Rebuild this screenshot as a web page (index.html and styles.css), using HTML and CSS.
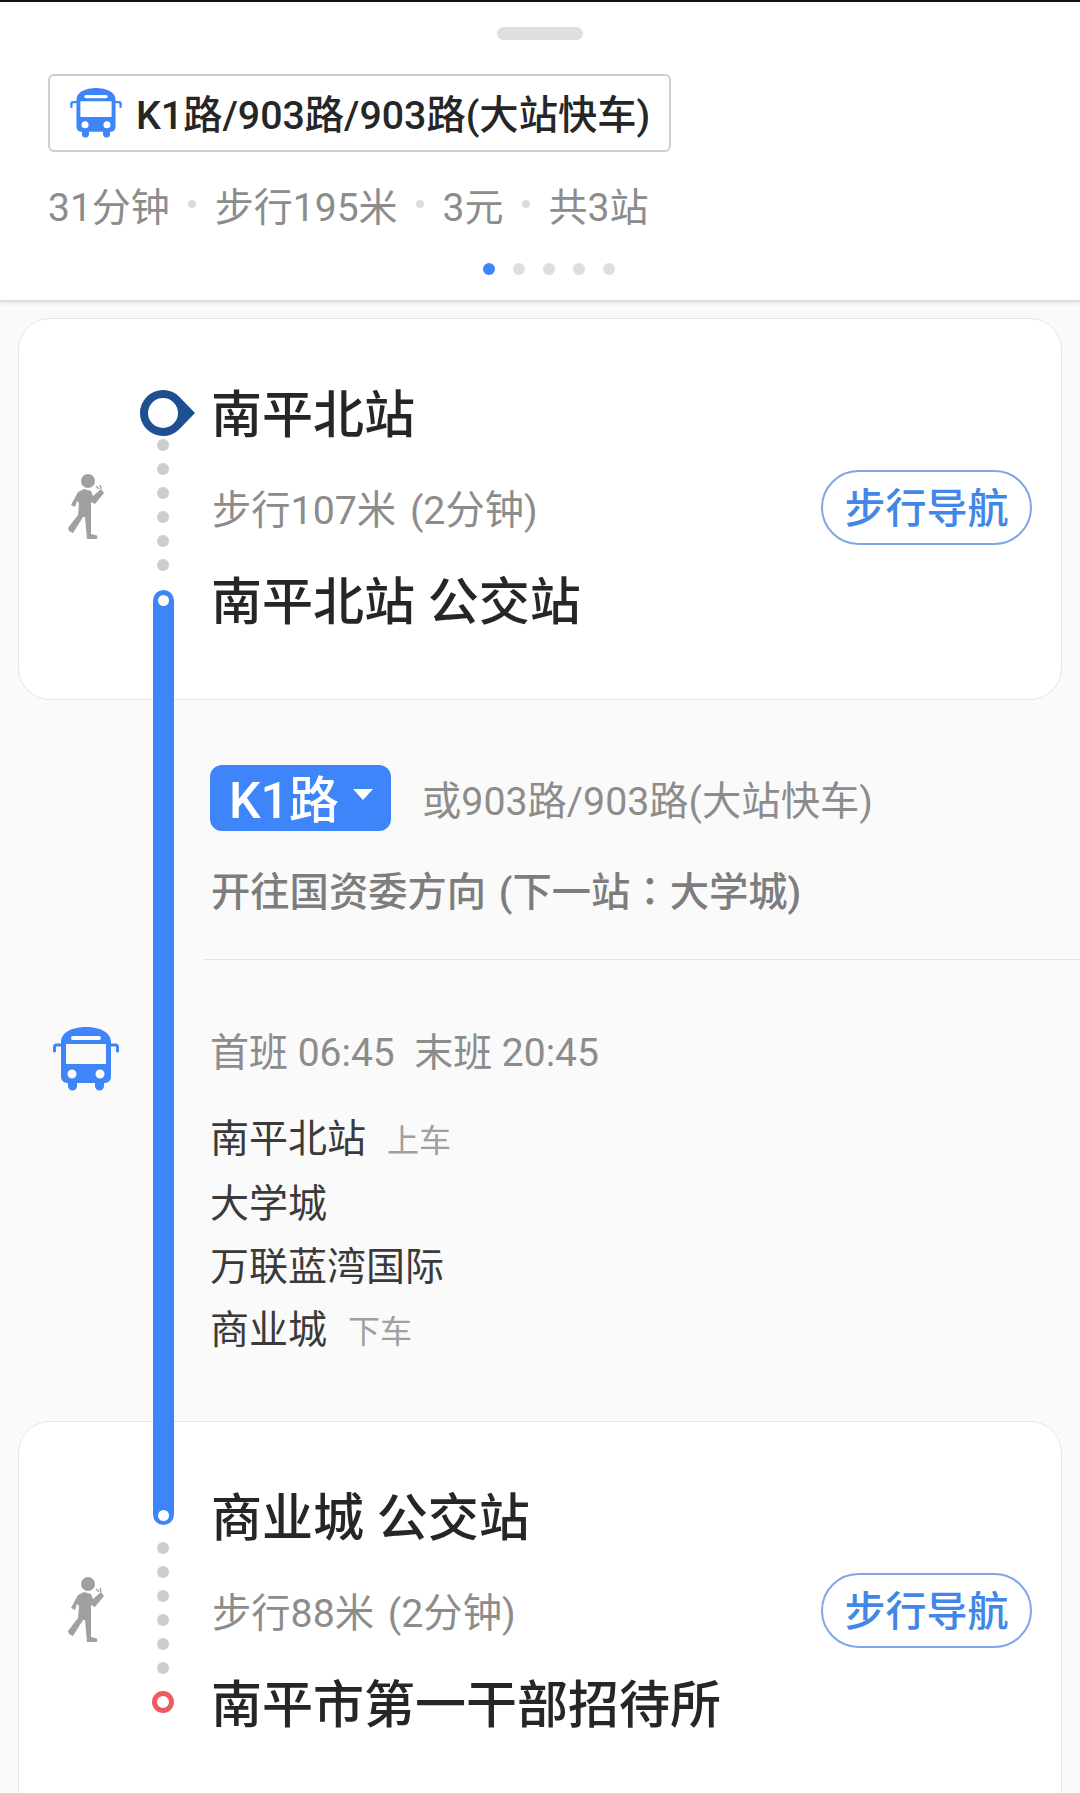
FILE: index.html
```html
<!DOCTYPE html>
<html lang="zh-CN">
<head>
    <meta charset="UTF-8">
    <meta name="viewport" content="width=device-width, initial-scale=1.0">
    <title>公交路线详情</title>
    <link rel="stylesheet" href="styles.css">
</head>
<body>
    <svg class="icon-defs" width="0" height="0">
        <symbol id="bus" viewBox="0 0 66 64">
            <path fill="currentColor" fill-rule="evenodd" d="M8 15C8 5 20 0 33 0s25 5 25 15v35a6 6 0 0 1-6 6h-1v3a4.500 4.500 0 0 1-9 0v-3H24v3a4.500 4.500 0 0 1-9 0v-3h-1a6 6 0 0 1-6-6zM20 9a2 2 0 0 0 0 4h26a2 2 0 0 0 0-4zM13 17v20h40V17zM19 42.500a4.500 4.500 0 1 0 0 9 4.500 4.500 0 0 0 0-9zM47 42.500a4.500 4.500 0 1 0 0 9 4.500 4.500 0 0 0 0-9z"/>
            <path fill="none" stroke="currentColor" stroke-width="3" stroke-linecap="round" d="M8 18H3.500C2 18 1.500 19 1.500 20v4M58 18h4.500c1.500 0 2 1 2 2v4"/>
        </symbol>
        <symbol id="walker" viewBox="0 0 37 66">
            <circle cx="20" cy="7" r="7" fill="currentColor"/>
            <path fill="currentColor" d="M10 18L16 15L23 17L25 22L33 15L36 19L27 30L23 28L23 37L23 60L29 61.500Q30 65 28 65H19L17 43L15 43L5 59L1 57L0 54L10 41L11 29L9 27L7 33L3 31Z"/>
            <path fill="none" stroke="currentColor" stroke-width="1.300" d="M28 12L31 15M32 11L33 15"/>
        </symbol>
    </svg>

    <div class="page">
        <header class="summary">
            <div class="handle"></div>
            <div class="route-chip">
                <svg class="chip-icon"><use href="#bus"/></svg>
                <span>K1路/903路/903路(大站快车)</span>
            </div>
            <div class="meta">
                <span>31分钟</span><i></i>
                <span>步行195米</span><i></i>
                <span>3元</span><i></i>
                <span>共3站</span>
            </div>
            <div class="pager">
                <b class="active"></b><b></b><b></b><b></b><b></b>
            </div>
        </header>

        <!-- Walk to the stop -->
        <section class="segment card card-first">
            <div class="side-icon">
                <svg class="walker"><use href="#walker"/></svg>
            </div>
            <div class="rail rail-start">
                <svg class="marker-start" viewBox="0 0 46 46">
                    <path fill="#1d4f91" d="M39.500 7L55 23L39.500 39A23 23 0 1 1 39.500 7z"/>
                    <circle cx="23" cy="23" r="15" fill="#fff"/>
                </svg>
                <div class="dots"><b></b><b></b><b></b><b></b><b></b><b></b></div>
                <div class="bus-line line-top"></div>
            </div>
            <div class="walk-body">
                <h3>南平北站</h3>
                <div class="walk-row">
                    <span>步行107米 (2分钟)</span>
                    <a class="nav-btn">步行导航</a>
                </div>
                <h3>南平北站 公交站</h3>
            </div>
        </section>

        <!-- Ride -->
        <section class="segment ride">
            <div class="side-icon">
                <svg class="bus-icon"><use href="#bus"/></svg>
            </div>
            <div class="rail">
                <div class="bus-line"></div>
            </div>
            <div class="ride-body">
                <div class="line-head">
                    <div class="line-row">
                        <span class="line-badge">K1路<i class="caret"></i></span>
                        <span class="line-alt">或903路/903路(大站快车)</span>
                    </div>
                    <div class="direction">开往国资委方向 (下一站<span class="colon" lang="zh-TW">：</span>大学城)</div>
                </div>
                <div class="line-detail">
                    <div class="schedule">首班 06:45&nbsp;&nbsp;末班 20:45</div>
                    <ul class="stops">
                        <li>南平北站<small>上车</small></li>
                        <li>大学城</li>
                        <li>万联蓝湾国际</li>
                        <li>商业城<small>下车</small></li>
                    </ul>
                </div>
            </div>
        </section>

        <!-- Walk to the destination -->
        <section class="segment card card-last">
            <div class="side-icon">
                <svg class="walker"><use href="#walker"/></svg>
            </div>
            <div class="rail rail-end">
                <div class="bus-line line-bottom"></div>
                <div class="dots"><b></b><b></b><b></b><b></b><b></b><b></b></div>
                <div class="marker-end"></div>
            </div>
            <div class="walk-body">
                <h3>商业城 公交站</h3>
                <div class="walk-row">
                    <span>步行88米 (2分钟)</span>
                    <a class="nav-btn">步行导航</a>
                </div>
                <h3>南平市第一干部招待所</h3>
            </div>
        </section>
    </div>
</body>
</html>
```

FILE: styles.css
```css
/* General Styles */
html, body {
    margin: 0;
    padding: 0;
}

body {
    font-family: Roboto, "Noto Sans CJK SC", sans-serif;
    background-color: #fafafa;
}

.icon-defs {
    position: absolute;
}

.page {
    width: 1080px;
    height: 1793px;
    overflow: hidden;
}

/* Summary header */
.summary {
    box-sizing: border-box;
    height: 302px;
    padding-top: 25px;
    background-color: #fff;
    border-top: 2px solid #111;
    border-bottom: 2px solid #dedede;
    box-shadow: 0 3px 3px #f0f0f0;
}

.handle {
    width: 86px;
    height: 13px;
    margin: 0 auto;
    border-radius: 7px;
    background-color: #dfdfdf;
}

.route-chip {
    box-sizing: border-box;
    display: inline-flex;
    align-items: center;
    gap: 13px;
    width: 623px;
    height: 78px;
    margin: 34px 0 0 48px;
    padding-left: 19px;
    border: 2px solid #cfcfcf;
    border-radius: 6px;
    font-size: 39.3px;
    font-weight: 500;
    color: #262626;
    white-space: nowrap;
}

.route-chip span {
    margin-bottom: 3px;
}

.chip-icon {
    width: 54px;
    height: 50px;
    color: #3e85fa;
}

.meta {
    display: flex;
    align-items: center;
    gap: 18.5px;
    height: 50px;
    margin: 27px 0 0 48px;
    font-size: 39px;
    color: #8c8c8c;
}

.meta i {
    width: 8px;
    height: 8px;
    border-radius: 50%;
    background-color: #dcdcdc;
}

.pager {
    display: flex;
    justify-content: center;
    gap: 18px;
    margin: 34px 0 0 18px;
}

.pager b {
    width: 12px;
    height: 12px;
    border-radius: 50%;
    background-color: #dedede;
}

.pager b.active {
    background-color: #3e85fa;
}

/* Timeline segments */
.segment {
    display: grid;
    grid-template-columns: 122px 44px 1fr;
}

.card {
    box-sizing: border-box;
    margin: 0 18px;
    background-color: #fff;
    border: 1px solid #e6e6e6;
    border-radius: 32px;
}

.card-first {
    height: 382px;
    margin-top: 16px;
}

.card-last {
    height: 420px;
}

.ride {
    height: 721px;
    padding-left: 19px;
}

.side-icon {
    display: flex;
    align-items: center;
    justify-content: center;
    padding-left: 12px;
}

.ride .side-icon {
    padding-bottom: 4px;
}

.card-first .side-icon {
    padding-bottom: 4px;
}

.card-last .side-icon {
    align-items: flex-start;
    padding-top: 155px;
}

.walker {
    width: 37px;
    height: 66px;
    color: #a0a0a0;
}

.bus-icon {
    width: 66px;
    height: 64px;
    color: #3e85fa;
}

/* Rail */
.rail {
    display: flex;
    flex-direction: column;
    align-items: center;
}

.rail-start {
    padding-top: 71px;
}

.marker-start {
    flex: none;
    width: 46px;
    height: 46px;
    overflow: visible;
}

.dots {
    display: flex;
    flex-direction: column;
    gap: 12px;
}

.dots b {
    width: 12px;
    height: 12px;
    border-radius: 50%;
    background-color: #cdcdcd;
}

.rail-start .dots {
    margin-top: 3px;
}

.bus-line {
    flex: 1;
    position: relative;
    width: 21px;
    background-color: #3e85fa;
}

.line-top {
    margin: 19px 0 -1px;
    border-radius: 11px 11px 0 0;
}

.line-top::after,
.line-bottom::after {
    content: '';
    position: absolute;
    left: 5px;
    width: 11px;
    height: 11px;
    border-radius: 50%;
    background-color: #fff;
}

.line-top::after {
    top: 5px;
}

.line-bottom::after {
    bottom: 4px;
}

.line-bottom {
    flex: none;
    height: 104px;
    margin-top: -1px;
    border-radius: 0 0 11px 11px;
}

.rail-end .dots {
    margin-top: 17px;
}

.marker-end {
    width: 22px;
    height: 22px;
    margin-top: 17px;
    box-sizing: border-box;
    border: 5px solid #ee5a5f;
    border-radius: 50%;
    background-color: #fff;
}

/* Walk segment text */
.walk-body {
    padding: 67px 29px 0 26px;
}

.walk-body h3 {
    margin: 0;
    font-size: 51px;
    line-height: 60px;
    font-weight: 500;
    color: #262626;
    white-space: nowrap;
}

.walk-row {
    display: flex;
    align-items: center;
    justify-content: space-between;
    height: 127px;
    padding-left: 1px;
    font-size: 39.3px;
    word-spacing: 4px;
    color: #8c8c8c;
}

.walk-row span {
    margin-bottom: 7px;
}

.nav-btn {
    box-sizing: border-box;
    width: 211px;
    height: 75px;
    margin-bottom: 4px;
    border: 2px solid #7fa6e6;
    border-radius: 38px;
    font-size: 41px;
    font-weight: 500;
    line-height: 75px;
    text-align: center;
    color: #4287e8;
}

/* Ride segment text */
.line-head {
    box-sizing: border-box;
    height: 260px;
    margin-left: 19px;
    padding: 65px 0 0 6px;
    border-bottom: 1px solid #e4e4e4;
}

.line-row {
    display: flex;
    align-items: center;
    height: 66px;
}

.line-badge {
    box-sizing: border-box;
    display: flex;
    align-items: center;
    width: 181px;
    height: 66px;
    padding: 0 0 5px 19px;
    border-radius: 12px;
    background-color: #3e85fa;
    font-size: 50px;
    font-weight: 500;
    color: #fff;
}

.caret {
    width: 0;
    height: 0;
    margin: 0 0 2px 14px;
    border-left: 10px solid transparent;
    border-right: 10px solid transparent;
    border-top: 11px solid #fff;
}

.line-alt {
    margin: 0 0 2px 31px;
    font-size: 39.3px;
    color: #8c8c8c;
}

.direction {
    margin-top: 31px;
    padding-left: 1px;
    font-size: 39.3px;
    line-height: 54px;
    font-weight: 500;
    word-spacing: 3px;
    color: #7d7d7d;
}

.colon {
    font-family: "Noto Sans CJK TC", sans-serif;
}

.line-detail {
    padding-left: 25px;
}

.schedule {
    margin-top: 66px;
    font-size: 39px;
    line-height: 54px;
    color: #8c8c8c;
}

.stops {
    margin: 28px 0 0;
    padding: 0;
    list-style: none;
    font-size: 39px;
    line-height: 63px;
    color: #3a3a3a;
}

.stops small {
    margin-left: 21px;
    font-size: 32px;
    color: #a0a0a0;
}
```
